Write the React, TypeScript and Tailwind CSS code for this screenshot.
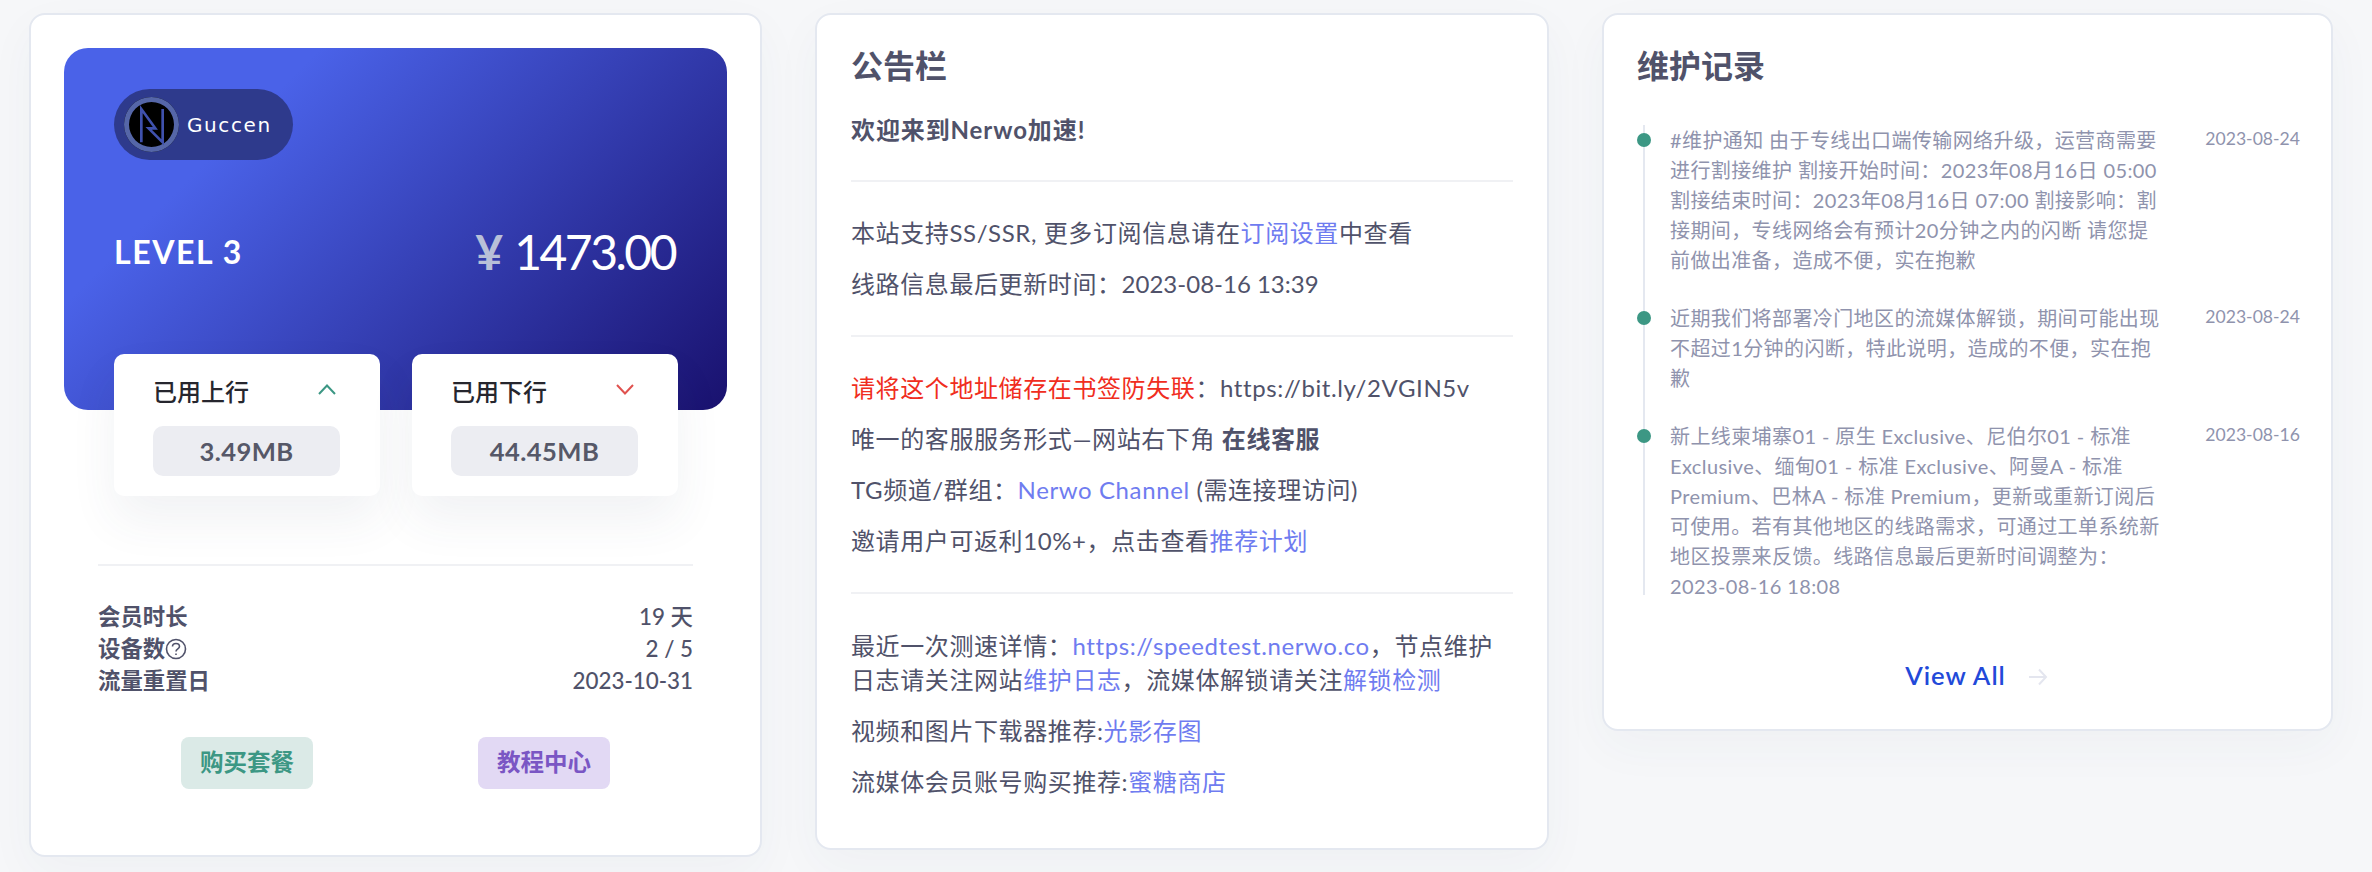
import React from "react";

const font = "font-['Lato','Noto_Sans_CJK_SC',sans-serif]";

const Link: React.FC<{ children: React.ReactNode }> = ({ children }) => (
  <span className="text-[#6f7cf0]">{children}</span>
);

const Divider: React.FC = () => <div className="h-[2px] bg-[#f0f1f4]" />;

const Chevron: React.FC<{ dir: "up" | "down" }> = ({ dir }) => (
  <svg width="18" height="11" viewBox="0 0 18 11" fill="none" stroke={dir === "up" ? "#3c9784" : "#e0524f"} strokeWidth="2">
    <path d={dir === "up" ? "M1 10 L9 1.5 L17 10" : "M1 1 L9 9.5 L17 1"} />
  </svg>
);

const StatCard: React.FC<{ title: string; value: string; dir: "up" | "down" }> = ({ title, value, dir }) => (
  <div className="h-[142px] w-[266px] rounded-[10px] bg-white px-[39px] pt-[14px] shadow-[0_24px_48px_rgba(60,70,100,0.07)]">
    <div className="flex h-[48px] items-center justify-between pr-[5px] text-[24px] font-medium leading-[32px] text-[#26262e]">
      <span>{title}</span>
      <span className="mb-[6px] flex"><Chevron dir={dir} /></span>
    </div>
    <div className="mt-[10px] flex h-[50px] w-[187px] items-center justify-center rounded-[10px] bg-[#ecedf2] text-[25.6px] font-bold tracking-[0.4px] text-[#565868]">
      {value}
    </div>
  </div>
);

const InfoRow: React.FC<{ label: React.ReactNode; value: string }> = ({ label, value }) => (
  <div className="flex h-[32px] items-center justify-between text-[22.4px]">
    <span className="flex items-center font-bold">{label}</span>
    <span className="font-medium">{value}</span>
  </div>
);

const AccountCard: React.FC = () => (
  <div className="h-[844px] rounded-[16px] border-2 border-[#e4e8f0] bg-white px-[33px] pt-[33px] shadow-[0_16px_48px_rgba(60,70,100,0.04)]">
    <div className="h-[362px] rounded-[24px] bg-[linear-gradient(135deg,#4a62e8_25%,#19116e_100%)] pl-[50px] pr-[49px] pt-[41px]">
      <div className="flex h-[71px] w-[179px] items-center rounded-full bg-[#2e3a8c] pl-[10px]">
        <div className="flex h-[55px] w-[55px] items-center justify-center rounded-full bg-black ring-[5px] ring-inset ring-[#5566a8]">
          <svg width="46" height="46" viewBox="29 29 138 138" fill="none" stroke="#3f51ad" strokeWidth="8">
            <path d="M66 150 V50 L108 108 H88 L130 150 V50" />
          </svg>
        </div>
        <span className="ml-[8px] font-['DejaVu_Sans',sans-serif] text-[20px] tracking-[1.6px] text-white">Guccen</span>
      </div>
      <div className="mt-[58px] flex h-[68px] items-center justify-between pr-[3px]">
        <span className="text-[32px] font-bold tracking-[1.6px] text-white">LEVEL 3</span>
        <span className="flex items-center text-[48px] font-normal tracking-[-2.5px] text-white">
          <span className="mr-[11px] font-bold tracking-normal text-[#b8c0d8]">¥</span>1473.00
        </span>
      </div>
      <div className="mt-[68px] flex justify-between">
        <StatCard title="已用上行" value="3.49MB" dir="up" />
        <StatCard title="已用下行" value="44.45MB" dir="down" />
      </div>
    </div>
    <div className="mx-[34px] mt-[154px]">
      <Divider />
      <div className="mt-[35px] text-[#50526a]">
        <InfoRow label="会员时长" value="19 天" />
        <InfoRow
          label={
            <>
              设备数
              <svg className="shrink-0" width="22" height="22" viewBox="0 0 22 22" fill="none" stroke="#50526a" strokeWidth="1.6">
                <circle cx="11" cy="11" r="9.5" />
                <path d="M7.5 8.5 C7.5 4.4 14.5 4.4 14.5 8.5 C14.5 11 11 10.8 11 13.6" />
                <path d="M11 15.4 V17" />
              </svg>
            </>
          }
          value="2 / 5"
        />
        <InfoRow label="流量重置日" value="2023-10-31" />
      </div>
      <div className="mt-[40px] flex">
        <div className="ml-[83px] flex h-[52px] w-[132px] items-center justify-center rounded-[8px] bg-[#dbeae7] text-[23.5px] font-bold text-[#3c9784]">
          购买套餐
        </div>
        <div className="ml-[165px] flex h-[52px] w-[132px] items-center justify-center rounded-[8px] bg-[#e2d9f4] text-[23.5px] font-bold text-[#7a56c4]">
          教程中心
        </div>
      </div>
    </div>
  </div>
);

const Para: React.FC<{ children: React.ReactNode }> = ({ children }) => (
  <p className="mb-[17px] leading-[34px]">{children}</p>
);

const NoticeCard: React.FC = () => (
  <div className="h-[837px] rounded-[16px] border-2 border-[#e4e8f0] bg-white px-[34px] pt-[27px] text-[24px] tracking-[0.6px] text-[#50526a] shadow-[0_16px_48px_rgba(60,70,100,0.04)]">
    <h2 className="text-[32px] font-bold leading-[48px] tracking-normal text-[#50526a]">公告栏</h2>
    <div className="mt-[23px]">
      <p className="mb-[33px] font-bold leading-[34px] tracking-[0.9px]">欢迎来到Nerwo加速!</p>
      <Divider />
      <div className="mt-[34px]">
        <Para>本站支持SS/SSR, 更多订阅信息请在<Link>订阅设置</Link>中查看</Para>
        <Para>线路信息最后更新时间：<span className="tracking-normal">2023-08-16 13:39</span></Para>
      </div>
      <div className="mt-[34px]"><Divider /></div>
      <div className="mt-[34px]">
        <Para><span className="text-[#f02d20]">请将这个地址储存在书签防失联</span>：https://bit.ly/2VGIN5v</Para>
        <Para>唯一的客服服务形式—网站右下角 <b>在线客服</b></Para>
        <Para>TG频道/群组：<Link>Nerwo Channel</Link> (需连接理访问)</Para>
        <Para>邀请用户可返利10%+，点击查看<Link>推荐计划</Link></Para>
      </div>
      <div className="mt-[34px]"><Divider /></div>
      <div className="mt-[35px]">
        <Para>最近一次测速详情：<Link>https://speedtest.nerwo.co</Link>，节点维护日志请关注网站<Link>维护日志</Link>，流媒体解锁请关注<Link>解锁检测</Link></Para>
        <Para>视频和图片下载器推荐:<Link>光影存图</Link></Para>
        <Para>流媒体会员账号购买推荐:<Link>蜜糖商店</Link></Para>
      </div>
    </div>
  </div>
);

const logs = [
  {
    date: "2023-08-24",
    text: "#维护通知 由于专线出口端传输网络升级，运营商需要进行割接维护 割接开始时间：2023年08月16日 05:00 割接结束时间：2023年08月16日 07:00 割接影响：割接期间，专线网络会有预计20分钟之内的闪断 请您提前做出准备，造成不便，实在抱歉",
  },
  {
    date: "2023-08-24",
    text: "近期我们将部署冷门地区的流媒体解锁，期间可能出现不超过1分钟的闪断，特此说明，造成的不便，实在抱歉",
  },
  {
    date: "2023-08-16",
    text: "新上线柬埔寨01 - 原生 Exclusive、尼伯尔01 - 标准 Exclusive、缅甸01 - 标准 Exclusive、阿曼A - 标准 Premium、巴林A - 标准 Premium，更新或重新订阅后可使用。若有其他地区的线路需求，可通过工单系统新地区投票来反馈。线路信息最后更新时间调整为：2023-08-16 18:08",
  },
];

const LogCard: React.FC = () => (
  <div className="h-[718px] rounded-[16px] border-2 border-[#e4e8f0] bg-white pl-[33px] pr-[31px] pt-[27px] shadow-[0_16px_48px_rgba(60,70,100,0.04)]">
    <h2 className="text-[32px] font-bold leading-[48px] text-[#50526a]">维护记录</h2>
    <div className="relative mt-[35px]">
      <div className="absolute bottom-[6px] left-[6px] top-0 w-[2px] bg-[#e4e8f0]" />
      {logs.map((log, i) => (
        <div key={i} className="relative mb-[28px] flex justify-between last:mb-0">
          <div className="absolute left-0 top-[8px] h-[14px] w-[14px] rounded-full bg-[#3c9784]" />
          <p className="ml-[33px] w-[494px] text-[20px] leading-[30px] tracking-[0.4px] text-[#8f93ad]">{log.text}</p>
          <span className="text-[17.6px] leading-[28px] text-[#8f93ad]">{log.date}</span>
        </div>
      ))}
    </div>
    <div className="mt-[55px] flex items-center justify-center pl-[16px]">
      <span className="text-[25.6px] font-semibold tracking-[1px] text-[#2249d9]">View All</span>
      <svg className="ml-[22px] mt-[4px]" width="20" height="18" viewBox="0 0 20 18" fill="none" stroke="#e4e6ef" strokeWidth="2">
        <path d="M1 9 H18 M11 1.5 L18 9 L11 16.5" />
      </svg>
    </div>
  </div>
);

export default function App() {
  return (
    <div className={`${font} h-[872px] w-[2372px] overflow-hidden bg-[#f6f7f9]`}>
      <div className="grid grid-cols-[733px_734px_731px] items-start gap-[53px] pl-[29px] pt-[13px]">
        <AccountCard />
        <NoticeCard />
        <LogCard />
      </div>
    </div>
  );
}
